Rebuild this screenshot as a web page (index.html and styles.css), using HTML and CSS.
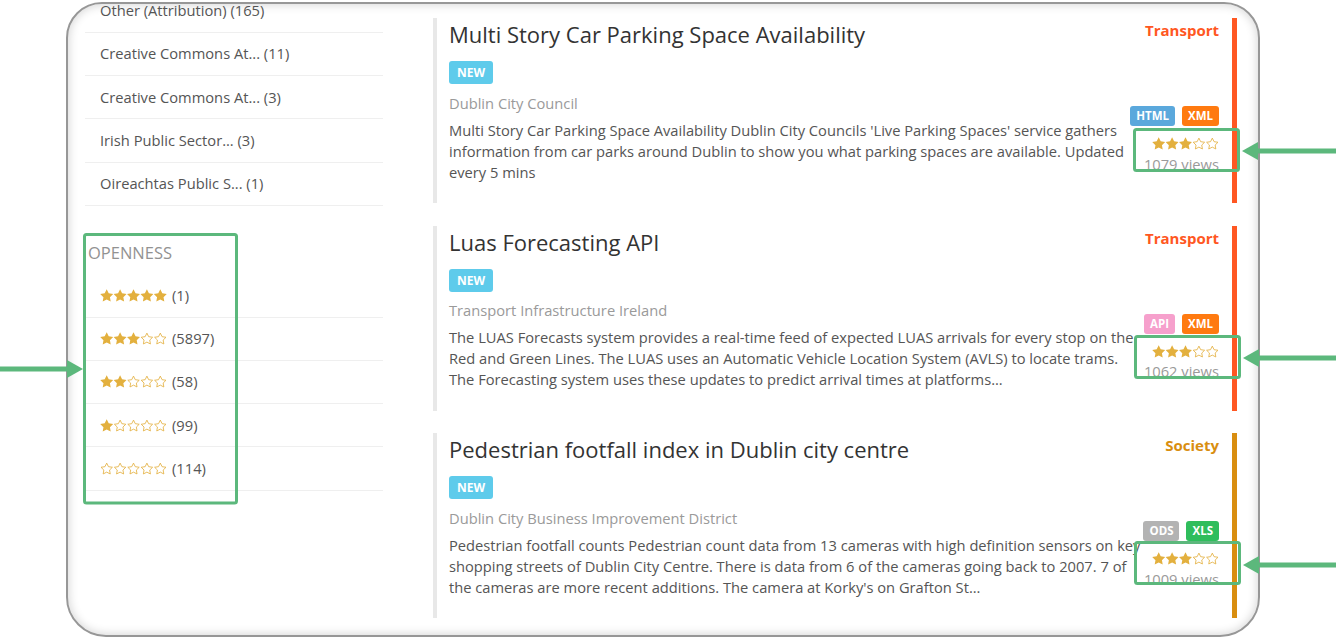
FILE: index.html
```html
<!DOCTYPE html>
<html lang="en">
<head>
<meta charset="utf-8">
<title>Datasets</title>
<link rel="stylesheet" href="styles.css">
</head>
<body>
<svg class="defs" width="0" height="0" aria-hidden="true">
  <symbol id="sf" viewBox="0 0 24 23"><path d="M12 0.4L15.59 7.66L23.6 8.83L17.8 14.48L19.17 22.47L12 18.7L4.83 22.47L6.2 14.48L0.4 8.83L8.41 7.66Z" fill="#e3b03e"/></symbol>
  <symbol id="se" viewBox="0 0 24 23"><path d="M12 0.4L15.59 7.66L23.6 8.83L17.8 14.48L19.17 22.47L12 18.7L4.83 22.47L6.2 14.48L0.4 8.83L8.41 7.66Z" transform="translate(12 12.6) scale(0.88) translate(-12 -12.6)" fill="none" stroke="#e3b03e" stroke-width="1.7" stroke-linejoin="round"/></symbol>
</svg>

<div class="frame">
  <aside class="sidebar">
    <ul class="facet">
      <li>Other (Attribution) (165)</li>
      <li>Creative Commons At... (11)</li>
      <li>Creative Commons At... (3)</li>
      <li>Irish Public Sector... (3)</li>
      <li>Oireachtas Public S... (1)</li>
    </ul>
    <h3 class="facet-title">Openness</h3>
    <ul class="facet">
      <li class="rate-row">
        <svg class="stars" viewBox="0 0 67 13" width="67" height="13"><use href="#sf" x="0" width="13.4" height="13"/><use href="#sf" x="13.4" width="13.4" height="13"/><use href="#sf" x="26.8" width="13.4" height="13"/><use href="#sf" x="40.2" width="13.4" height="13"/><use href="#sf" x="53.6" width="13.4" height="13"/></svg>
        <span>(1)</span>
      </li>
      <li class="rate-row">
        <svg class="stars" viewBox="0 0 67 13" width="67" height="13"><use href="#sf" x="0" width="13.4" height="13"/><use href="#sf" x="13.4" width="13.4" height="13"/><use href="#sf" x="26.8" width="13.4" height="13"/><use href="#se" x="40.2" width="13.4" height="13"/><use href="#se" x="53.6" width="13.4" height="13"/></svg>
        <span>(5897)</span>
      </li>
      <li class="rate-row">
        <svg class="stars" viewBox="0 0 67 13" width="67" height="13"><use href="#sf" x="0" width="13.4" height="13"/><use href="#sf" x="13.4" width="13.4" height="13"/><use href="#se" x="26.8" width="13.4" height="13"/><use href="#se" x="40.2" width="13.4" height="13"/><use href="#se" x="53.6" width="13.4" height="13"/></svg>
        <span>(58)</span>
      </li>
      <li class="rate-row">
        <svg class="stars" viewBox="0 0 67 13" width="67" height="13"><use href="#sf" x="0" width="13.4" height="13"/><use href="#se" x="13.4" width="13.4" height="13"/><use href="#se" x="26.8" width="13.4" height="13"/><use href="#se" x="40.2" width="13.4" height="13"/><use href="#se" x="53.6" width="13.4" height="13"/></svg>
        <span>(99)</span>
      </li>
      <li class="rate-row">
        <svg class="stars" viewBox="0 0 67 13" width="67" height="13"><use href="#se" x="0" width="13.4" height="13"/><use href="#se" x="13.4" width="13.4" height="13"/><use href="#se" x="26.8" width="13.4" height="13"/><use href="#se" x="40.2" width="13.4" height="13"/><use href="#se" x="53.6" width="13.4" height="13"/></svg>
        <span>(114)</span>
      </li>
    </ul>
  </aside>

  <main class="results">
    <article class="card transport">
      <h2 class="card-title">Multi Story Car Parking Space Availability</h2>
      <span class="badge-new">NEW</span>
      <div class="publisher">Dublin City Council</div>
      <p class="desc">Multi Story Car Parking Space Availability Dublin City Councils 'Live Parking Spaces' service gathers<br>information from car parks around Dublin to show you what parking spaces are available. Updated<br>every 5 mins</p>
      <div class="side">
        <div class="category">Transport</div>
        <div class="formats"><span class="fmt html">HTML</span><span class="fmt xml">XML</span></div>
        <svg class="stars rating" viewBox="0 0 67 13" width="67" height="13"><use href="#sf" x="0" width="13.4" height="13"/><use href="#sf" x="13.4" width="13.4" height="13"/><use href="#sf" x="26.8" width="13.4" height="13"/><use href="#se" x="40.2" width="13.4" height="13"/><use href="#se" x="53.6" width="13.4" height="13"/></svg>
        <div class="views">1079 views</div>
      </div>
    </article>

    <article class="card transport">
      <h2 class="card-title">Luas Forecasting API</h2>
      <span class="badge-new">NEW</span>
      <div class="publisher">Transport Infrastructure Ireland</div>
      <p class="desc">The LUAS Forecasts system provides a real-time feed of expected LUAS arrivals for every stop on the<br>Red and Green Lines. The LUAS uses an Automatic Vehicle Location System (AVLS) to locate trams.<br>The Forecasting system uses these updates to predict arrival times at platforms...</p>
      <div class="side">
        <div class="category">Transport</div>
        <div class="formats"><span class="fmt api">API</span><span class="fmt xml">XML</span></div>
        <svg class="stars rating" viewBox="0 0 67 13" width="67" height="13"><use href="#sf" x="0" width="13.4" height="13"/><use href="#sf" x="13.4" width="13.4" height="13"/><use href="#sf" x="26.8" width="13.4" height="13"/><use href="#se" x="40.2" width="13.4" height="13"/><use href="#se" x="53.6" width="13.4" height="13"/></svg>
        <div class="views">1062 views</div>
      </div>
    </article>

    <article class="card society">
      <h2 class="card-title">Pedestrian footfall index in Dublin city centre</h2>
      <span class="badge-new">NEW</span>
      <div class="publisher">Dublin City Business Improvement District</div>
      <p class="desc">Pedestrian footfall counts Pedestrian count data from 13 cameras with high definition sensors on key<br>shopping streets of Dublin City Centre. There is data from 6 of the cameras going back to 2007. 7 of<br>the cameras are more recent additions. The camera at Korky's on Grafton St...</p>
      <div class="side">
        <div class="category">Society</div>
        <div class="formats"><span class="fmt ods">ODS</span><span class="fmt xls">XLS</span></div>
        <svg class="stars rating" viewBox="0 0 67 13" width="67" height="13"><use href="#sf" x="0" width="13.4" height="13"/><use href="#sf" x="13.4" width="13.4" height="13"/><use href="#sf" x="26.8" width="13.4" height="13"/><use href="#se" x="40.2" width="13.4" height="13"/><use href="#se" x="53.6" width="13.4" height="13"/></svg>
        <div class="views">1009 views</div>
      </div>
    </article>
  </main>
</div>

<svg class="annot" width="1336" height="641" viewBox="0 0 1336 641" aria-hidden="true">
  <g fill="none" stroke="#5cb87c" stroke-width="3">
    <rect x="84.5" y="234.5" width="152" height="268.5" rx="2"/>
    <rect x="1134.5" y="129.5" width="104" height="41" rx="2"/>
    <rect x="1135.5" y="336.5" width="104" height="41" rx="2"/>
    <rect x="1135.5" y="542.5" width="104" height="41" rx="2"/>
  </g>
  <g fill="#5cb87c">
    <rect x="0" y="366.5" width="70" height="5"/>
    <polygon points="83,369 67,360 67,378"/>
    <rect x="1255" y="148.5" width="81" height="5"/>
    <polygon points="1242,151 1258,142 1258,160"/>
    <rect x="1256" y="355.5" width="80" height="5"/>
    <polygon points="1243,358 1259,349 1259,367"/>
    <rect x="1256" y="562.5" width="80" height="5"/>
    <polygon points="1243,565 1259,556 1259,574"/>
  </g>
</svg>
</body>
</html>
```

FILE: styles.css
```css
html, body {
  margin: 0;
  padding: 0;
}

body {
  position: relative;
  width: 1336px;
  height: 641px;
  overflow: hidden;
  background: #ffffff;
  font-family: "Open Sans", "DejaVu Sans", sans-serif;
}

.defs {
  position: absolute;
  width: 0;
  height: 0;
  overflow: hidden;
}

.frame {
  box-sizing: border-box;
  display: flex;
  align-items: flex-start;
  width: 1194px;
  height: 635px;
  margin: 2px 0 0 66px;
  padding-left: 17px;
  border: 2px solid #979797;
  border-radius: 36px 36px 40px 40px;
  box-shadow: inset 0 0 10px 1px rgba(0, 0, 0, 0.16);
  overflow: hidden;
  background: #ffffff;
}

/* Sidebar */
.sidebar {
  flex: none;
  width: 298px;
  margin-top: -14.5px;
}

.facet {
  list-style: none;
  margin: 0;
  padding: 0;
}

.facet li {
  padding: 10.625px 15px;
  line-height: 21px;
  font-size: 14.7px;
  color: #555555;
  border-bottom: 1px solid #efefef;
}

.facet-title {
  margin: 36.5px 0 10px 3px;
  font-size: 16.5px;
  line-height: 22px;
  font-weight: 400;
  color: #929292;
  text-transform: uppercase;
}

.facet li.rate-row {
  display: flex;
  align-items: center;
  gap: 5px;
}

.stars {
  display: block;
  flex: none;
}

/* Results */
.results {
  flex: none;
  width: 804px;
  margin: 14px 0 0 50px;
}

.card {
  position: relative;
  box-sizing: border-box;
  height: 185px;
  margin-bottom: 22.5px;
  padding: 2px 0 0 12px;
  border-left: 4px solid #e8e8e8;
  border-right: 5px solid #ff5722;
}

.card.society {
  border-right-color: #d98e10;
}

.card-title {
  margin: 0;
  font-size: 22px;
  line-height: 28px;
  font-weight: 400;
  color: #333333;
}

.badge-new {
  display: block;
  width: 44px;
  height: 23px;
  margin-top: 13px;
  border-radius: 3px;
  background: #5ecbeb;
  color: #ffffff;
  font-size: 12px;
  font-weight: 700;
  line-height: 23px;
  text-align: center;
}

.publisher {
  margin-top: 8.5px;
  font-size: 14.7px;
  line-height: 21px;
  color: #9a9a9a;
}

.desc {
  margin: 6px 0 0;
  font-size: 14.7px;
  line-height: 21px;
  color: #555555;
  white-space: nowrap;
}

.side {
  position: absolute;
  top: 0;
  right: 13px;
  display: flex;
  flex-direction: column;
  align-items: flex-end;
}

.category {
  font-size: 15px;
  line-height: 24px;
  font-weight: 700;
  color: #ff5722;
}

.society .category {
  color: #d98e10;
}

.formats {
  display: flex;
  gap: 7px;
  margin-top: 64px;
}

.fmt {
  height: 20px;
  padding: 0 6px;
  border-radius: 3px;
  color: #ffffff;
  font-size: 11.5px;
  font-weight: 700;
  line-height: 20px;
}

.fmt.html { background: #5aa8dc; }
.fmt.xml { background: #ff7a10; }
.fmt.api { background: #f6a0cc; }
.fmt.ods { background: #b3b3b3; }
.fmt.xls { background: #2fbd5c; }

.rating {
  margin-top: 11px;
}

.views {
  margin-top: 3.5px;
  font-size: 14.7px;
  line-height: 21px;
  color: #9a9a9a;
}

/* Annotation layer */
.annot {
  position: absolute;
  left: 0;
  top: 0;
  pointer-events: none;
}
```
